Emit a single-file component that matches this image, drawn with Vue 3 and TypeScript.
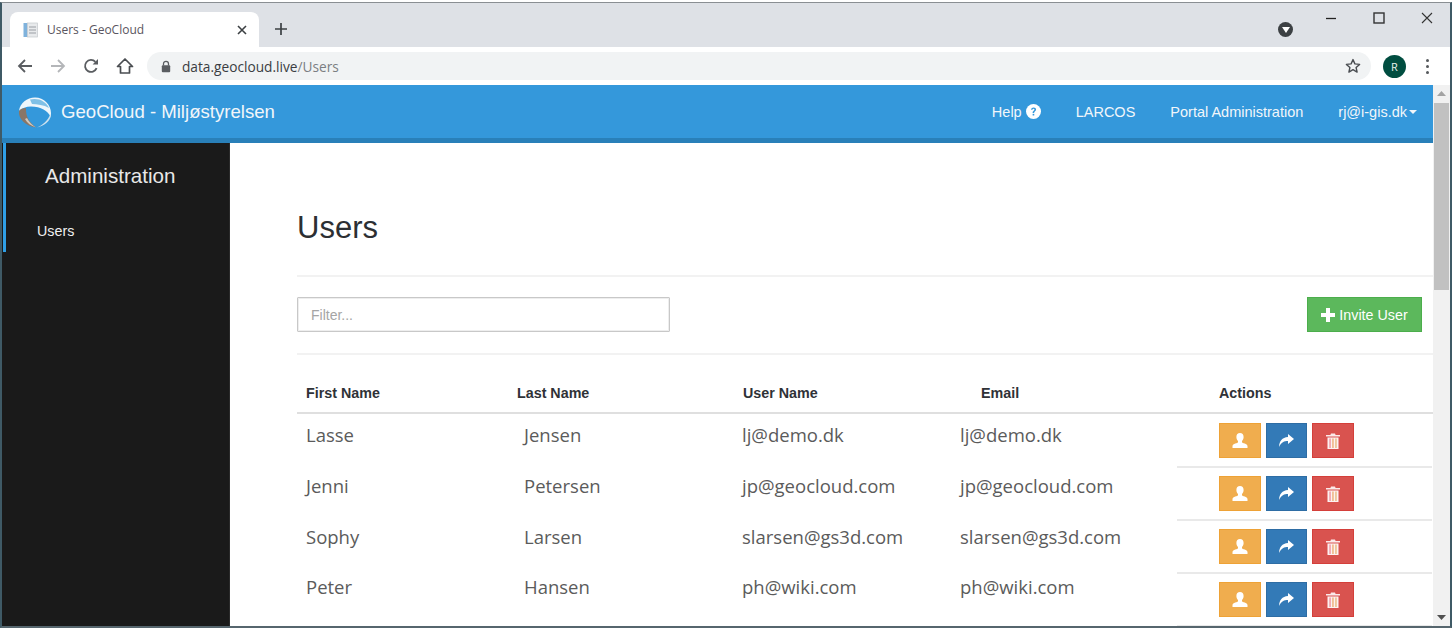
<script setup lang="ts">
interface UserRow { first: string; last: string; user: string; email: string }
const users: UserRow[] = [
  { first: 'Lasse', last: 'Jensen', user: 'lj@demo.dk', email: 'lj@demo.dk' },
  { first: 'Jenni', last: 'Petersen', user: 'jp@geocloud.com', email: 'jp@geocloud.com' },
  { first: 'Sophy', last: 'Larsen', user: 'slarsen@gs3d.com', email: 'slarsen@gs3d.com' },
  { first: 'Peter', last: 'Hansen', user: 'ph@wiki.com', email: 'ph@wiki.com' },
]
</script>

<template>
  <div class="window">
    <div class="tabstrip">
      <div class="tab">
        <svg class="favicon" width="16" height="16" viewBox="0 0 16 16">
          <rect x="0.5" y="1" width="4" height="14" fill="#7fb2dc" />
          <rect x="4.5" y="1" width="10" height="14" fill="#e8eaec" stroke="#c4c8cc" stroke-width="0.7" />
          <path d="M6 5h7M6 8h7M6 11h7" stroke="#b4b8bc" stroke-width="1.4" />
        </svg>
        <span class="tab-title">Users - GeoCloud</span>
        <svg class="tab-close" width="10" height="10" viewBox="0 0 10 10"><path d="M1 1l8 8M9 1l-8 8" stroke="#3c4043" stroke-width="1.6" /></svg>
      </div>
      <svg class="newtab" width="14" height="14" viewBox="0 0 14 14"><path d="M7 1v12M1 7h12" stroke="#3c4043" stroke-width="1.7" /></svg>
      <div class="strip-space"></div>
      <div class="media"><svg width="8" height="6" viewBox="0 0 8 6"><path d="M0 0h8L4 6z" fill="#fff" /></svg></div>
      <div class="winbtns">
        <svg width="12" height="12" viewBox="0 0 12 12"><path d="M1 6.5h10" stroke="#222" stroke-width="1.3" /></svg>
        <svg width="12" height="12" viewBox="0 0 12 12"><rect x="1" y="1" width="10" height="10" fill="none" stroke="#333" stroke-width="1.4" /></svg>
        <svg width="12" height="12" viewBox="0 0 12 12"><path d="M1 1l10 10M11 1L1 11" stroke="#333" stroke-width="1.1" /></svg>
      </div>
    </div>

    <div class="toolbar">
      <svg class="tool" width="16" height="16" viewBox="0 0 16 16"><path d="M15 8H2M8 2L2 8l6 6" fill="none" stroke="#5a5d61" stroke-width="1.8" /></svg>
      <svg class="tool dim" width="16" height="16" viewBox="0 0 16 16"><path d="M1 8h13M8 2l6 6-6 6" fill="none" stroke="#b4b6b9" stroke-width="1.8" /></svg>
      <svg class="tool" width="16" height="16" viewBox="0 0 16 16"><path d="M13.6 10.2A6 6 0 1 1 12.4 3.8" fill="none" stroke="#5a5d61" stroke-width="1.8" /><path d="M9.6 6.4h5.4V1z" fill="#5a5d61" /></svg>
      <svg class="tool" width="18" height="18" viewBox="0 0 18 18"><path d="M9 2L1.500 9.500H4.500V16h9V9.500h3z" fill="none" stroke="#4a4d51" stroke-width="1.7" stroke-linejoin="round" /></svg>
      <div class="omnibox">
        <svg width="10" height="13" viewBox="0 0 10 13"><path d="M2.500 5.500V3.800a2.500 2.500 0 0 1 5 0v1.700" fill="none" stroke="#5a5d61" stroke-width="1.3" /><rect x="0.8" y="5.300" width="8.400" height="7" rx="1" fill="#5a5d61" /></svg>
        <span class="url"><span class="url-host">data.geocloud.live</span>/Users</span>
        <svg class="star" width="16" height="16" viewBox="0 0 16 16"><path d="M8 1.600l1.900 4.300 4.700.5-3.500 3.100 1 4.600L8 11.700l-4.100 2.400 1-4.600L1.400 6.400l4.700-.5z" fill="none" stroke="#4a4d51" stroke-width="1.4" stroke-linejoin="round" /></svg>
      </div>
      <div class="avatar">R</div>
      <div class="kebab"><i></i><i></i><i></i></div>
    </div>

    <div class="page">
      <div class="page-main">
        <header class="navbar">
          <svg class="logo" width="36" height="36" viewBox="0 0 36 36">
            <path d="M2 17C3 9 10 3.500 18 3.500c9 0 16 7.500 16 15.500l-.3 4C31 17 24 12.500 14 12.500 9 12.500 5 14 2 17z" fill="#eef6fb" />
            <path d="M13 5.500c8-2 16 1.500 19 8.500-5-3-12-4-17-4z" fill="#7fc0e6" />
            <path d="M2 17c-1 8 7 15 17 16.500C13 29 8.500 23 9 14c-3 0-6 1-7 3z" fill="#8a7666" />
            <path d="M10 24c2 4 5 7 9 9.500C14 32 10 29 8 25z" fill="#cfc8bf" />
            <path d="M34 21c-.5 6-7 11-14 12.500 6-2.500 11-7.500 13-12.500z" fill="#cfe2ee" />
          </svg>
          <span class="brand">GeoCloud - Miljøstyrelsen</span>
          <nav class="nav">
            <span class="nav-help">Help
              <svg width="15" height="15" viewBox="0 0 14 14"><circle cx="7" cy="7" r="7" fill="#fff" /><path d="M4.700 5.300C4.900 3.900 5.900 3.200 7.100 3.200c1.300 0 2.300.8 2.300 2 0 1.800-1.800 1.600-1.800 3.100H6.200c0-2.200 1.700-2 1.700-3 0-.4-.3-.8-.9-.8-.6 0-.9.400-1 .9z" fill="#3498db" /><rect x="6.200" y="9.200" width="1.500" height="1.500" fill="#3498db" /></svg>
            </span>
            <span>LARCOS</span>
            <span>Portal Administration</span>
            <span class="nav-user">rj@i-gis.dk<i class="caret"></i></span>
          </nav>
        </header>

        <div class="body">
          <aside class="sidebar">
            <div class="side-active">
              <div class="side-title">Administration</div>
              <div class="side-link">Users</div>
            </div>
          </aside>

          <main class="content">
            <h1 class="title">Users</h1>
            <div class="toolrow">
              <input class="filter" type="text" placeholder="Filter..." />
              <button class="invite" type="button">
                <svg width="14" height="14" viewBox="0 0 14 14"><path d="M5 0h4v5h5v4H9v5H5V9H0V5h5z" fill="#fff" /></svg>
                Invite User
              </button>
            </div>
            <div class="thead">
              <span>First Name</span>
              <span>Last Name</span>
              <span>User Name</span>
              <span>Email</span>
              <span>Actions</span>
            </div>
            <div class="tbody">
              <div class="names">
                <div v-for="u in users" :key="u.user" class="name-row">
                  <span>{{ u.first }}</span>
                  <span>{{ u.last }}</span>
                  <span>{{ u.user }}</span>
                  <span>{{ u.email }}</span>
                </div>
              </div>
              <div class="actions">
                <div v-for="u in users" :key="u.user" class="action-row">
                  <button class="act act-warn" type="button" aria-label="Impersonate">
                    <svg width="16" height="15" viewBox="0 0 16 15"><path d="M8 0c2.300 0 3.600 1.700 3.600 3.900 0 1.700-.7 3.200-1.600 4.200v1.200c0 .9 5.500 1.500 5.500 3.600V15H.5v-2.100c0-2.100 5.500-2.700 5.500-3.600V8.100C5.100 7.100 4.400 5.600 4.400 3.900 4.400 1.700 5.700 0 8 0z" fill="#fff" /></svg>
                  </button>
                  <button class="act act-blue" type="button" aria-label="Share">
                    <svg width="15" height="13" viewBox="0 0 15 13"><path d="M9 0l6 5-6 5V7C5 7 2.500 8 0 13c.4-6 3-9.500 9-10z" fill="#fff" /></svg>
                  </button>
                  <button class="act act-red" type="button" aria-label="Delete">
                    <svg width="14" height="16" viewBox="0 0 14 16"><path d="M5 .5h4l.6 1.500H14v1.500H0V2h4.400z" fill="#fbe9e9" /><rect x="1.500" y="4.500" width="11" height="11.500" fill="#fdf1f1" /><rect x="3.300" y="5.500" width="1.500" height="9.500" fill="#f09aa6" /><rect x="6.200" y="5.500" width="1.500" height="9.500" fill="#eeb27e" /><rect x="9.200" y="5.500" width="1.500" height="9.500" fill="#e9bd86" /></svg>
                  </button>
                </div>
              </div>
            </div>
          </main>
        </div>
      </div>

      <div class="scrollbar">
        <svg width="9" height="5" viewBox="0 0 9 5"><path d="M0 5h9L4.500 0z" fill="#a3a3a3" /></svg>
        <div class="thumb"></div>
        <div class="track"></div>
        <svg width="9" height="5" viewBox="0 0 9 5"><path d="M0 0h9L4.500 5z" fill="#505050" /></svg>
      </div>
    </div>
  </div>
</template>

<style>
html, body { margin: 0; padding: 0; background: #fff; overflow: hidden; }
</style>

<style scoped>
.window {
  width: 1452px;
  height: 626px;
  margin-top: 2px;
  box-sizing: border-box;
  border: 2px solid #3f5a66;
  border-top: 1px solid #8a8f93;
  border-bottom-color: #56666e;
  overflow: hidden;
  display: flex;
  flex-direction: column;
  background: #fff;
  font-family: "Liberation Sans", Arial, sans-serif;
}
.tabstrip {
  height: 44px;
  flex: none;
  background: #dee1e6;
  display: flex;
  align-items: flex-end;
  padding-left: 8px;
  box-sizing: border-box;
}
.tab {
  width: 249px;
  height: 35px;
  background: #fff;
  border-radius: 8px 8px 0 0;
  display: flex;
  align-items: center;
  padding: 0 9px 0 13px;
  box-sizing: border-box;
  flex: none;
}
.favicon { flex: none; }
.tab-title {
  margin-left: 8px;
  font: 12px "Open Sans", sans-serif;
  color: #5a5560;
  flex: 1;
}
.tab-close { flex: none; margin-right: 3px; }
.newtab { margin: 0 0 11px 15px; flex: none; }
.strip-space { flex: 1; }
.media {
  width: 15px;
  height: 15px;
  border-radius: 50%;
  background: #3c4043;
  display: flex;
  align-items: center;
  justify-content: center;
  margin-bottom: 10px;
  flex: none;
}
.winbtns {
  align-self: flex-start;
  display: flex;
  gap: 36px;
  margin: 9px 17px 0 32px;
}
.toolbar {
  height: 38px;
  flex: none;
  background: #fff;
  display: flex;
  align-items: center;
  padding-left: 15px;
  box-sizing: border-box;
}
.tool { flex: none; margin-right: 17px; }
.omnibox {
  width: 1224px;
  height: 28px;
  margin-left: -4px;
  background: #f1f3f4;
  border-radius: 14px;
  display: flex;
  align-items: center;
  padding: 0 10px 0 14px;
  box-sizing: border-box;
  flex: none;
}
.url {
  margin-left: 11px;
  flex: 1;
  font: 13.7px "Open Sans", sans-serif;
  color: #7b7e82;
}
.url-host { color: #3a3d42; }
.star { flex: none; }
.avatar {
  width: 23px;
  height: 23px;
  margin-left: 12px;
  border-radius: 50%;
  background: #004d40;
  color: #e8f0ee;
  font: 11px "Open Sans", sans-serif;
  display: flex;
  align-items: center;
  justify-content: center;
  flex: none;
}
.kebab {
  display: flex;
  flex-direction: column;
  gap: 3px;
  margin-left: 20px;
}
.kebab i {
  width: 3px;
  height: 3px;
  border-radius: 50%;
  background: #55585c;
  display: block;
}
.page {
  flex: 1;
  min-height: 0;
  display: flex;
}
.page-main {
  flex: 1;
  min-width: 0;
  display: flex;
  flex-direction: column;
}
.navbar {
  height: 58px;
  flex: none;
  box-sizing: border-box;
  background: #3498db;
  border-bottom: 5px solid #2980b9;
  display: flex;
  align-items: center;
  color: #f1f6fa;
  padding: 0 16px 0 15px;
}
.logo { flex: none; }
.brand {
  margin-left: 8px;
  font-size: 18.6px;
}
.nav {
  margin-left: auto;
  display: flex;
  align-items: center;
  gap: 35px;
  font-size: 14.5px;
}
.nav-help { display: flex; align-items: center; gap: 4px; }
.nav-user { display: flex; align-items: center; }
.caret {
  margin-left: 2px;
  border-left: 4px solid transparent;
  border-right: 4px solid transparent;
  border-top: 4px solid #f1f6fa;
}
.body {
  flex: 1;
  min-height: 0;
  display: flex;
}
.sidebar {
  width: 228px;
  flex: none;
  background: #1a1a1a;
  border-right: 1px solid #2a2a2a;
  box-sizing: border-box;
}
.side-active {
  height: 109px;
  margin-left: 1px;
  border-left: 3px solid #2f9fe6;
  padding-top: 20px;
  box-sizing: border-box;
}
.side-title {
  font-size: 20.6px;
  line-height: 26px;
  color: #e8e8e8;
  padding-left: 39px;
}
.side-link {
  margin-top: 33px;
  font-size: 14.3px;
  line-height: 18px;
  color: #f0f0f0;
  padding-left: 31px;
}
.content {
  flex: 1;
  min-width: 0;
  padding-left: 67px;
  overflow: hidden;
}
.title {
  margin: 0;
  height: 134px;
  box-sizing: border-box;
  padding-top: 65px;
  font-weight: 400;
  font-size: 31px;
  line-height: 40px;
  color: #2c2f33;
  border-bottom: 2px solid #f2f2f2;
}
.toolrow {
  height: 78px;
  box-sizing: border-box;
  border-bottom: 2px solid #f2f2f2;
  display: flex;
  align-items: center;
  justify-content: space-between;
  padding: 0 11px 2px 0;
}
.filter {
  width: 373px;
  height: 35px;
  box-sizing: border-box;
  border: 1px solid #c8c8c8;
  box-shadow: inset 0 0 0 1px #eeeeee;
  border-radius: 1px;
  padding: 2px 13px 0;
  font: 14px "Liberation Sans", Arial, sans-serif;
  color: #555;
  outline: none;
  background: #fff;
}
.filter::placeholder { color: #a5a5a5; opacity: 1; }
.invite {
  width: 115px;
  height: 35px;
  border: 1px solid #4cae4c;
  background: #5cb85c;
  color: #fff;
  font: 14.3px "Liberation Sans", Arial, sans-serif;
  display: flex;
  align-items: center;
  justify-content: center;
  gap: 4px;
  padding: 1px 0 0;
}
.thead {
  height: 59px;
  box-sizing: border-box;
  border-bottom: 2px solid #dfdfdf;
  display: grid;
  grid-template-columns: 211px 226px 238px 238px 1fr;
  align-items: center;
  padding: 19px 0 0 9px;
  font-size: 14.3px;
  font-weight: 700;
  color: #2f3237;
}
.tbody {
  display: grid;
  grid-template-columns: 880px 255px;
  padding-top: 1px;
}
.names { margin-top: -5px; }
.name-row {
  display: grid;
  grid-template-columns: repeat(4, 218px);
  height: 50.7px;
  align-items: center;
  padding-left: 9px;
  font: 18.5px "Open Sans", sans-serif;
  color: #5b5b5b;
  line-height: 30px;
}
.actions { display: flex; flex-direction: column; }
.action-row {
  height: 53px;
  box-sizing: border-box;
  display: flex;
  gap: 5px;
  padding: 8px 0 0 42px;
  border-bottom: 2px solid #e9e9e9;
  flex: none;
}
.act {
  width: 41.7px;
  height: 35px;
  padding: 0;
  display: flex;
  align-items: center;
  justify-content: center;
  border: 1px solid;
  flex: none;
}
.act-warn { background: #f0ad4e; border-color: #eea236; }
.act-blue { background: #337ab7; border-color: #2e6da4; }
.act-red { background: #d9534f; border-color: #d43f3a; }
.scrollbar {
  width: 17px;
  flex: none;
  background: #f1f1f1;
  display: flex;
  flex-direction: column;
  align-items: center;
  padding: 6px 0;
  box-sizing: border-box;
  height: 100%;
}
.thumb {
  width: 15px;
  height: 187px;
  background: #c1c1c1;
  margin-top: 7px;
  flex: none;
}
.track { flex: 1; }
</style>
